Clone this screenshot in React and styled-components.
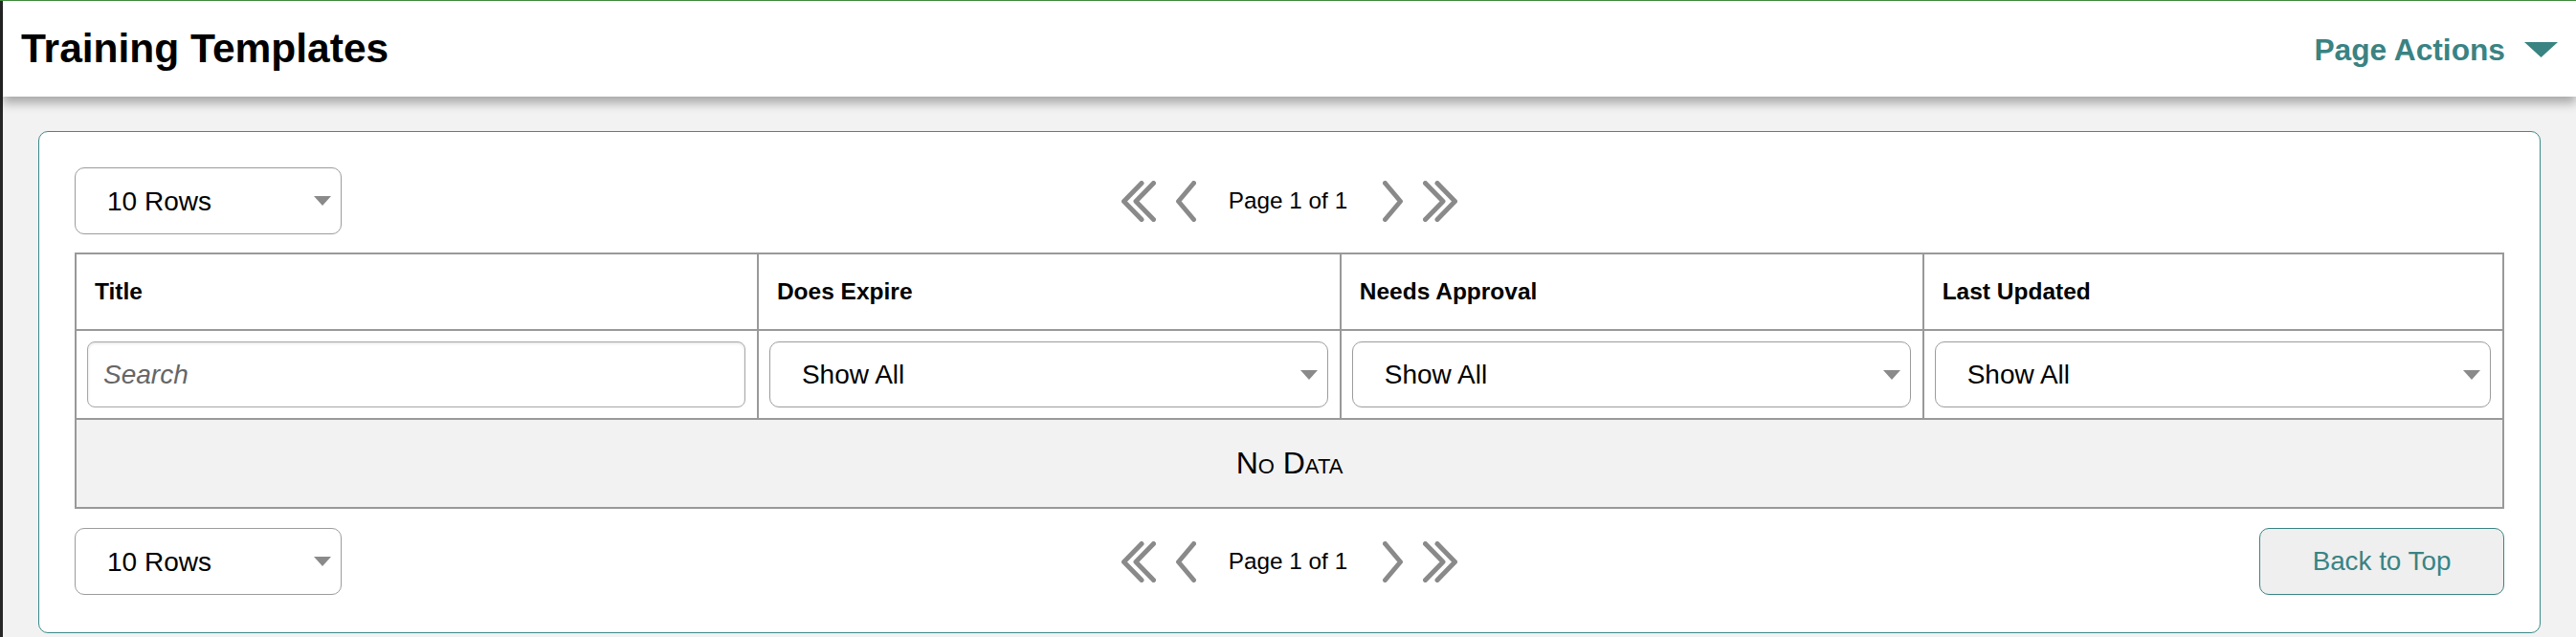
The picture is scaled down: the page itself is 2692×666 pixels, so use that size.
import React from "react";
import styled, { createGlobalStyle } from "styled-components";

const GlobalStyle = createGlobalStyle`
  * { box-sizing: border-box; }
  html, body { margin: 0; padding: 0; }
  body {
    background: #f2f2f2;
    font-family: "Liberation Sans", Arial, Helvetica, sans-serif;
    color: #000;
  }
`;

const TEAL = "#3a8383";

const Shell = styled.div`
  display: flex;
  min-height: 666px;
  border-top: 1px solid #3f8c3c;
`;

const SideEdge = styled.div`
  width: 3px;
  flex: none;
  background: #272727;
`;

const Main = styled.main`
  flex: 1;
  min-width: 0;
`;

const PageHeader = styled.header`
  position: relative;
  z-index: 1;
  height: 100px;
  background: #fff;
  display: flex;
  align-items: center;
  justify-content: space-between;
  padding: 0 19px 0 19px;
  box-shadow: 0 7px 10px rgba(0, 0, 0, 0.3);
`;

const PageTitle = styled.h1`
  margin: 0;
  font-size: 42.5px;
  font-weight: 700;
  letter-spacing: 0;
  color: #000;
`;

const ActionsToggle = styled.button`
  display: flex;
  align-items: center;
  gap: 20px;
  border: 0;
  background: none;
  padding: 0;
  margin-top: 2px;
  font-family: inherit;
  font-size: 31.7px;
  font-weight: 700;
  color: ${TEAL};
  cursor: pointer;
`;

const Content = styled.div`
  padding: 36px 37px 0 37px;
`;

const Card = styled.section`
  background: #fff;
  border: 1px solid #3c8a8a;
  border-radius: 10px;
  padding: 37px 37px 39px 37px;
`;

const Toolbar = styled.div`
  display: grid;
  grid-template-columns: 1fr auto 1fr;
  align-items: center;
`;

const SelectWrap = styled.div`
  position: relative;
  width: ${(p) => p.$width || "100%"};
  justify-self: start;
`;

const NativeSelect = styled.select`
  appearance: none;
  -webkit-appearance: none;
  display: block;
  width: 100%;
  height: ${(p) => p.$height || 70}px;
  border: 1px solid #9c9c9c;
  border-radius: 10px;
  background: #fff;
  padding: 0 40px 0 33px;
  font-family: inherit;
  font-size: 28px;
  color: #000;
  outline: none;
`;

const Caret = styled.svg`
  position: absolute;
  right: 11px;
  top: 50%;
  transform: translateY(-50%);
  pointer-events: none;
`;

const Pager = styled.nav`
  display: flex;
  align-items: center;
`;

const PagerButton = styled.button`
  display: flex;
  border: 0;
  background: none;
  padding: 0;
  margin: ${(p) => p.$margin || "0"};
  cursor: pointer;
`;

const PageLabel = styled.span`
  font-size: 24.3px;
  color: #000;
  margin: 0 37px 0 34px;
  white-space: nowrap;
`;

const Grid = styled.table`
  width: 100%;
  margin: 19px 0 20px 0;
  border-collapse: collapse;
  table-layout: fixed;
`;

const HeadCell = styled.th`
  width: ${(p) => p.$width || "auto"};
  height: 80px;
  border: 2px solid #999;
  padding: 0 19px;
  text-align: left;
  font-size: 24.5px;
  font-weight: 700;
  color: #000;
`;

const FilterCell = styled.td`
  height: 93px;
  border: 2px solid #999;
  padding: 0 12px 0 11px;
`;

const SearchInput = styled.input`
  display: block;
  width: 100%;
  height: 69px;
  border: 1px solid #a8a8a8;
  border-radius: 8px;
  padding: 0 16px;
  font-family: inherit;
  font-size: 28px;
  background: #fff;
  box-shadow: inset 0 1px 3px rgba(0, 0, 0, 0.12);
  outline: none;

  &::placeholder {
    color: #666;
    font-style: italic;
  }
`;

const EmptyCell = styled.td`
  height: 93px;
  border: 2px solid #999;
  background: #f2f2f2;
  text-align: center;
  font-size: 32px;
  font-variant: small-caps;
  color: #000;
`;

const BackButton = styled.button`
  justify-self: end;
  width: 256px;
  height: 70px;
  border: 1px solid ${TEAL};
  border-radius: 10px;
  background: #efefef;
  font-family: inherit;
  font-size: 27.8px;
  color: ${TEAL};
  cursor: pointer;
`;

const Chevron = ({ dir = "left", double = false }) => {
  const w = double ? 36 : 21;
  const pts = double
    ? ["21,2.5 2.5,21.5 21,40.5", "33.5,2.5 15,21.5 33.5,40.5"]
    : ["18.5,2.5 2.5,21.5 18.5,40.5"];
  return (
    <svg
      width={w}
      height="43"
      viewBox={`0 0 ${w} 43`}
      style={dir === "right" ? { transform: "scaleX(-1)" } : undefined}
    >
      {pts.map((p) => (
        <polyline
          key={p}
          points={p}
          fill="none"
          stroke="#8a8a8a"
          strokeWidth="5"
          strokeLinecap="round"
          strokeLinejoin="round"
        />
      ))}
    </svg>
  );
};

const Select = ({ width, height, options }) => (
  <SelectWrap $width={width}>
    <NativeSelect $height={height} defaultValue={options[0]}>
      {options.map((o) => (
        <option key={o}>{o}</option>
      ))}
    </NativeSelect>
    <Caret width="18" height="10" viewBox="0 0 18 10">
      <polygon points="0,0 18,0 9,10" fill="#8a8a8a" />
    </Caret>
  </SelectWrap>
);

const Pagination = ({ page, total }) => (
  <Pager>
    <PagerButton aria-label="First page">
      <Chevron double />
    </PagerButton>
    <PagerButton aria-label="Previous page" $margin="0 0 0 21px">
      <Chevron />
    </PagerButton>
    <PageLabel>
      Page {page} of {total}
    </PageLabel>
    <PagerButton aria-label="Next page">
      <Chevron dir="right" />
    </PagerButton>
    <PagerButton aria-label="Last page" $margin="0 0 0 21px">
      <Chevron dir="right" double />
    </PagerButton>
  </Pager>
);

const ROW_OPTIONS = ["10 Rows", "25 Rows", "50 Rows", "100 Rows"];
const YES_NO = ["Show All", "Yes", "No"];
const UPDATED = ["Show All", "Last 7 Days", "Last 30 Days", "Last Year"];

const columns = [
  { key: "title", label: "Title", width: "28.1%" },
  { key: "expire", label: "Does Expire", width: "24%" },
  { key: "approval", label: "Needs Approval", width: "24%" },
  { key: "updated", label: "Last Updated" },
];

export default function App() {
  return (
    <>
      <GlobalStyle />
      <Shell>
        <SideEdge />
        <Main>
          <PageHeader>
            <PageTitle>Training Templates</PageTitle>
            <ActionsToggle>
              Page Actions
              <svg width="35" height="16" viewBox="0 0 35 16">
                <polygon points="0,0 35,0 17.5,16" fill={TEAL} />
              </svg>
            </ActionsToggle>
          </PageHeader>
          <Content>
            <Card>
              <Toolbar>
                <Select width="279px" options={ROW_OPTIONS} />
                <Pagination page={1} total={1} />
                <span />
              </Toolbar>
              <Grid>
                <thead>
                  <tr>
                    {columns.map((c) => (
                      <HeadCell key={c.key} $width={c.width}>
                        {c.label}
                      </HeadCell>
                    ))}
                  </tr>
                  <tr>
                    <FilterCell>
                      <SearchInput placeholder="Search" />
                    </FilterCell>
                    <FilterCell>
                      <Select height={69} options={YES_NO} />
                    </FilterCell>
                    <FilterCell>
                      <Select height={69} options={YES_NO} />
                    </FilterCell>
                    <FilterCell>
                      <Select height={69} options={UPDATED} />
                    </FilterCell>
                  </tr>
                </thead>
                <tbody>
                  <tr>
                    <EmptyCell colSpan={4}>No Data</EmptyCell>
                  </tr>
                </tbody>
              </Grid>
              <Toolbar>
                <Select width="279px" options={ROW_OPTIONS} />
                <Pagination page={1} total={1} />
                <BackButton>Back to Top</BackButton>
              </Toolbar>
            </Card>
          </Content>
        </Main>
      </Shell>
    </>
  );
}
